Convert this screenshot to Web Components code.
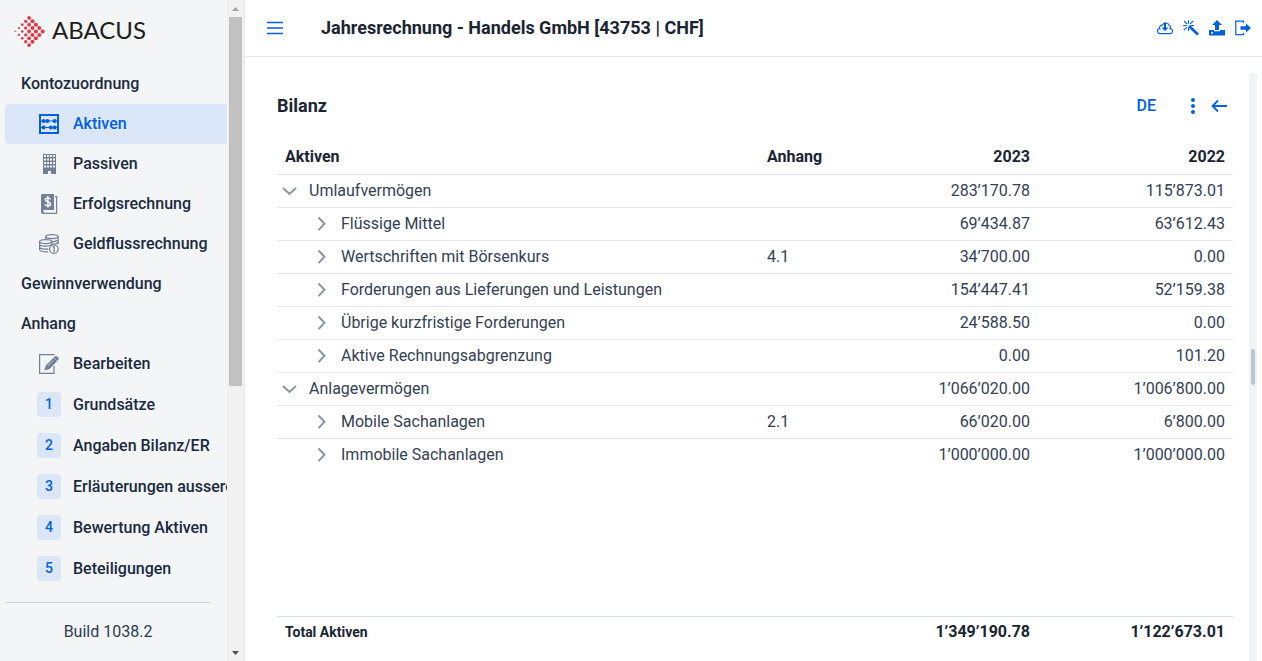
<!DOCTYPE html>
<html lang="de">
<head>
<meta charset="utf-8">
<title>Jahresrechnung</title>
<style>
  html, body { margin: 0; height: 100%; }
  body {
    font-family: Roboto, "Liberation Sans", sans-serif;
    font-size: 16px;
    line-height: 24px;
    background: #fff;
    color: #1a2433;
    --blue: #0060df;
    --tint: #dbe6f8;
    --panel: #f4f5f7;
    --grey: #718096;
    --line: #e6e8eb;
  }
</style>
</head>
<body>
<finance-app></finance-app>
<script>
const ICONS = {
  menu: '<path d="M0 2.500h16M0 8h16M0 13.500h16" stroke="currentColor" stroke-width="1.600"/>',
  abacus: '<path fill="none" stroke="currentColor" stroke-width="2" d="M1 1h18v18H1z"/><path d="M2 7h16M2 13.500h16" stroke="currentColor" stroke-width="1.200"/><g fill="currentColor"><circle cx="4.600" cy="7" r="2"/><circle cx="8.400" cy="7" r="2"/><circle cx="15.600" cy="7" r="2"/><circle cx="4.600" cy="13.500" r="2"/><circle cx="11.800" cy="13.500" r="2"/><circle cx="15.600" cy="13.500" r="2"/></g>',
  building: '<path fill="currentColor" fill-rule="evenodd" d="M4 0h13v20h-5v-3H9v3H4zM5 1v2h2V1zM8 1v2h2V1zM11 1v2h2V1zM14 1v2h2V1zM5 4.500v2h2v-2zM8 4.500v2h2v-2zM11 4.500v2h2v-2zM14 4.500v2h2v-2zM5 8v2h2V8zM8 8v2h2V8zM11 8v2h2V8zM14 8v2h2V8zM5 11.500v2h2v-2zM8 11.500v2h2v-2zM11 11.500v2h2v-2zM14 11.500v2h2v-2z"/>',
  report: '<path fill="currentColor" d="M3.500 0H15v16H5c-1.500 0-1.500 1.600 0 1.600V20H4.500A2.500 2.500 0 0 1 2 17.500v-16A1.500 1.500 0 0 1 3.500 0z"/><path fill="none" stroke="currentColor" stroke-width="1.200" d="M16 2.600h1.600v16.800H5"/><path fill="none" stroke="#f4f5f7" stroke-width="1.500" d="M11.500 5.500C10.800 3.300 6.300 3.300 6.300 5.800c0 2.500 5.300 1.500 5.300 4.100 0 2.500-4.900 2.500-5.600.2M8.900 2v11.500"/>',
  coins: '<g fill="none" stroke="currentColor" stroke-width="1.200"><ellipse cx="13" cy="2.600" rx="6.200" ry="2"/><path d="M6.800 2.600V5M19.200 2.600v7.600M12.500 7.600c3.500.3 6.700-.8 6.700-2.200M13.500 10c3.200.2 5.700-.9 5.700-2.200"/><ellipse cx="6.700" cy="7.600" rx="6.100" ry="2"/><path d="M.6 7.600v8.200c0 1.500 4 2.400 8.500 2.100M.6 10.300c0 2.200 10 2.700 12.200.4V7.600M.6 13c0 1.900 5.500 2.400 8.800 1.800"/><circle cx="14.900" cy="15.100" r="4.300" fill="#f4f5f7"/><path d="M13.700 13.600l1.400-.9v5.200"/></g>',
  edit: '<path fill="none" stroke="currentColor" stroke-width="1.200" d="M15 1.200V.7H.6v18.700H15V12"/><path fill="currentColor" d="M5.300 16.500l1.500-5L16 2.300c1.200-1.200 4.700 1.500 3.600 3.200L10.500 15z"/><path fill="none" stroke="#f4f5f7" stroke-width=".6" d="M14.700 3.600l3.200 3.200M8.500 12.200l5.800-5.800"/>',
  cloud: '<path fill="none" stroke="currentColor" stroke-width="1.100" d="M5.300 5.200A3.800 3.800 0 0 1 12.300 5.600C14.300 6.300 13.400 8 13.100 8.600c3.300 0 3.100 5 0 5H3.300c-3.600 0-3.700-5-.5-5C2 6 4 4.800 5.300 5.200z"/><path fill="currentColor" d="M7 2.500h2v5h2.500L8 11 4.500 7.500H7z"/>',
  wand: '<path d="M6 6l9 8.500" stroke="currentColor" stroke-width="2.800"/><path fill="none" stroke="currentColor" stroke-width="1.200" d="M5.500.2v3.600M.2 5.500h3.600M7.500 5.500h3.600M5.500 7.500v3.600M1.200 1.200l2.800 2.800M10.200.8L7.200 3.800M.8 10.200l3-3"/>',
  upload: '<path fill="currentColor" fill-rule="evenodd" d="M8 0l5 5h-3v5H6V5H3zM0 10h5v1.300h6V10h5v5.500H0zM2.300 12v1.700H4V12z"/>',
  exit: '<path fill="none" stroke="currentColor" stroke-width="1.200" d="M8.500 3V1.200H.8v13.500h7.700V13"/><path fill="currentColor" d="M5.500 6.200H11V3.500L16 8l-5 4.500V9.800H5.500z"/>',
  dots: '<g fill="currentColor"><circle cx="8" cy="2" r="2"/><circle cx="8" cy="8" r="2"/><circle cx="8" cy="14" r="2"/></g>',
  back: '<path fill="none" stroke="currentColor" stroke-width="1.800" d="M16 8H1.500M7 2.500L1.500 8 7 13.500"/>',
  down: '<path fill="none" stroke="currentColor" stroke-width="2" d="M2 5l6.500 6L15 5"/>',
  right: '<path fill="none" stroke="currentColor" stroke-width="2" d="M5.500 1.500l6 6.300-6 6.300"/>'
};

class UiIcon extends HTMLElement {
  connectedCallback() {
    const size = this.getAttribute('size') || 16;
    this.attachShadow({ mode: 'open' }).innerHTML = `
      <style>:host{display:inline-flex;flex:none} svg{display:block}</style>
      <svg width="${size}" height="${size}" viewBox="0 0 ${size} ${size}" aria-hidden="true">${ICONS[this.getAttribute('name')]}</svg>`;
  }
}
customElements.define('ui-icon', UiIcon);

class IconButton extends HTMLElement {
  connectedCallback() {
    this.attachShadow({ mode: 'open' }).innerHTML = `
      <style>
        :host{display:inline-flex;flex:none}
        button{display:flex;align-items:center;justify-content:center;width:100%;height:100%;padding:0;border:0;background:none;color:inherit;font:inherit;cursor:pointer}
      </style>
      <button type="button" aria-label="${this.getAttribute('label')}"><ui-icon name="${this.getAttribute('icon')}"></ui-icon></button>`;
  }
}
customElements.define('icon-button', IconButton);

class BrandLogo extends HTMLElement {
  connectedCallback() {
    let dots = '';
    for (let a = 0; a < 5; a++) for (let b = 0; b < 5; b++) {
      const r = Math.min(2, 0.8 + 0.27 * (a + b));
      dots += `<circle cx="${1.5 + 3.4 * (a + b)}" cy="${15.5 + 3.4 * (a - b)}" r="${r}"/>`;
    }
    this.attachShadow({ mode: 'open' }).innerHTML = `
      <style>
        :host{display:flex;align-items:center;gap:6px;height:64px;padding:0 0 4px 14px;box-sizing:border-box}
        svg{display:block;margin-top:4px}
        span{font:400 24px/32px Lato,sans-serif;color:#1d1d1b}
      </style>
      <svg width="32" height="32" viewBox="0 0 32 32" fill="#e23744" aria-hidden="true">${dots}</svg><span>ABACUS</span>`;
  }
}
customElements.define('brand-logo', BrandLogo);

class NavItem extends HTMLElement {
  connectedCallback() {
    const icon = this.getAttribute('icon');
    const number = this.getAttribute('number');
    const lead = icon ? `<ui-icon name="${icon}" size="20"></ui-icon>` : number ? `<span class="badge">${number}</span>` : '';
    this.attachShadow({ mode: 'open' }).innerHTML = `
      <style>
        :host{display:block;margin-left:5px}
        a{display:flex;align-items:center;height:40px;padding-left:16px;border-radius:4px 0 0 4px;color:#1a2a40;font-weight:500;text-decoration:none;white-space:nowrap}
        .lead{display:flex;justify-content:center;width:24px;margin:0 12px 0 16px;flex:none;color:var(--grey)}
        .badge{width:24px;height:25px;border-radius:4px;background:var(--tint);color:var(--blue);font-size:14px;line-height:25px;text-align:center}
        :host([number]) a{height:41px}
        :host([active]) a{background:var(--tint)}
        :host([active]) a,:host([active]) .lead{color:var(--blue)}
      </style>
      <a href="#">${lead && `<span class="lead">${lead}</span>`}<slot></slot></a>`;
  }
}
customElements.define('nav-item', NavItem);

class SideNav extends HTMLElement {
  connectedCallback() {
    this.attachShadow({ mode: 'open' }).innerHTML = `
      <style>
        :host{display:flex;flex:none;width:245px;height:100%;box-sizing:border-box;border-right:1px solid #e4e7ee;background:var(--panel)}
        .content{flex:1;min-width:0;overflow:hidden}
        footer{margin:13px 16px 0 5px;padding-top:17px;border-top:1px solid #cbd5e0;text-align:center;color:#2d3b50}
        .rail{display:flex;flex-direction:column;width:17px;background:#f1f1f1}
        .thumb{height:369px;margin:0 2px;background:#c1c1c1}
        .arrow{display:flex;align-items:center;justify-content:center;height:17px}
        .arrow.end{margin-top:auto}
      </style>
      <div class="content">
        <brand-logo></brand-logo>
        <nav>
          <nav-item>Kontozuordnung</nav-item>
          <nav-item icon="abacus" active>Aktiven</nav-item>
          <nav-item icon="building">Passiven</nav-item>
          <nav-item icon="report">Erfolgsrechnung</nav-item>
          <nav-item icon="coins">Geldflussrechnung</nav-item>
          <nav-item>Gewinnverwendung</nav-item>
          <nav-item>Anhang</nav-item>
          <nav-item icon="edit">Bearbeiten</nav-item>
          <nav-item number="1">Grundsätze</nav-item>
          <nav-item number="2">Angaben Bilanz/ER</nav-item>
          <nav-item number="3">Erläuterungen ausserordentlich</nav-item>
          <nav-item number="4">Bewertung Aktiven</nav-item>
          <nav-item number="5">Beteiligungen</nav-item>
        </nav>
        <footer>Build 1038.2</footer>
      </div>
      <div class="rail" aria-hidden="true">
        <div class="arrow"><svg width="7" height="4"><path d="M0 4l3.500-4L7 4z" fill="#a3a3a3"/></svg></div>
        <div class="thumb"></div>
        <div class="arrow end"><svg width="7" height="4"><path d="M0 0l3.500 4L7 0z" fill="#505050"/></svg></div>
      </div>`;
  }
}
customElements.define('side-nav', SideNav);

class PageHeader extends HTMLElement {
  connectedCallback() {
    this.attachShadow({ mode: 'open' }).innerHTML = `
      <style>
        :host{display:flex;align-items:center;height:57px;box-sizing:border-box;padding:0 11px 0 22px;border-bottom:1px solid var(--line)}
        h1{flex:1;margin:0 0 0 38px;font-size:18px;line-height:24px;font-weight:700;color:#1a2433}
        icon-button{width:16px;height:24px;color:var(--blue)}
        .actions{display:flex;gap:10px}
      </style>
      <icon-button icon="menu" label="Menü"></icon-button>
      <h1><slot></slot></h1>
      <div class="actions">
        <icon-button icon="cloud" label="Herunterladen"></icon-button>
        <icon-button icon="wand" label="Assistent"></icon-button>
        <icon-button icon="upload" label="Hochladen"></icon-button>
        <icon-button icon="exit" label="Abmelden"></icon-button>
      </div>`;
  }
}
customElements.define('page-header', PageHeader);

const ROWS = [
  [0, 'Umlaufvermögen', '', '283’170.78', '115’873.01'],
  [1, 'Flüssige Mittel', '', '69’434.87', '63’612.43'],
  [1, 'Wertschriften mit Börsenkurs', '4.1', '34’700.00', '0.00'],
  [1, 'Forderungen aus Lieferungen und Leistungen', '', '154’447.41', '52’159.38'],
  [1, 'Übrige kurzfristige Forderungen', '', '24’588.50', '0.00'],
  [1, 'Aktive Rechnungsabgrenzung', '', '0.00', '101.20'],
  [0, 'Anlagevermögen', '', '1’066’020.00', '1’006’800.00'],
  [1, 'Mobile Sachanlagen', '2.1', '66’020.00', '6’800.00'],
  [1, 'Immobile Sachanlagen', '', '1’000’000.00', '1’000’000.00']
];

class BalanceTable extends HTMLElement {
  connectedCallback() {
    const rows = ROWS.map(([level, name, note, current, previous]) => `
      <tr><td class="name level${level}"><icon-button icon="${level ? 'right' : 'down'}" label="${level ? 'Öffnen' : 'Schliessen'}"></icon-button><span>${name}</span></td>
      <td>${note}</td><td class="num">${current}</td><td class="num">${previous}</td></tr>`).join('');
    this.attachShadow({ mode: 'open' }).innerHTML = `
      <style>
        :host{display:flex;flex:1;min-height:0}
        table{display:flex;flex-direction:column;flex:1}
        thead,tbody,tfoot{display:block}
        tbody{flex:1}
        tr{display:grid;grid-template-columns:1fr 84px 195px 195px;border-bottom:1px solid var(--line)}
        th,td{box-sizing:border-box;height:32px;padding:0 8px;line-height:32px;text-align:left;white-space:nowrap}
        td{color:#344054}
        thead th{height:34px;line-height:34px;font-weight:700}
        .num{text-align:right}
        .name{display:flex;align-items:center;gap:8px;padding:0}
        .level1{padding-left:32px}
        icon-button{width:24px;height:24px;color:#8b95a5}
        tbody tr:last-child,tfoot tr{border-bottom:0}
        tfoot{border-top:1px solid #d3dbe3}
        tfoot th,tfoot td{height:30px;line-height:30px;font-weight:700;color:#1a2433}
        tfoot th{font-size:14px}
      </style>
      <table aria-label="Bilanz Aktiven">
        <thead><tr><th>Aktiven</th><th>Anhang</th><th class="num">2023</th><th class="num">2022</th></tr></thead>
        <tbody>${rows}</tbody>
        <tfoot><tr><th>Total Aktiven</th><td></td><td class="num">1’349’190.78</td><td class="num">1’122’673.01</td></tr></tfoot>
      </table>`;
  }
}
customElements.define('balance-table', BalanceTable);

class BalancePanel extends HTMLElement {
  connectedCallback() {
    this.attachShadow({ mode: 'open' }).innerHTML = `
      <style>
        :host{display:flex;flex:1;min-height:0;padding:16px 5px 0 32px}
        section{display:flex;flex-direction:column;flex:1;min-width:0;padding:16px 16px 14px 0}
        header{display:flex;align-items:center;height:33px;color:var(--blue)}
        h2{flex:1;margin:0;font-size:18px;line-height:24px;font-weight:700;color:#1a2433}
        .lang{padding:0;margin-right:29px;border:0;background:none;color:inherit;font:500 16px/24px Roboto,sans-serif}
        .tools{display:flex;gap:10px;margin-right:6px}
        icon-button{width:16px;height:24px}
        balance-table{margin-top:18px}
        .rail{display:flex;align-items:center;justify-content:center;width:8px;background:#f2f3f5}
        .thumb{width:4px;height:36px;border-radius:2px;background:#bcc5d0}
      </style>
      <section>
        <header>
          <h2>Bilanz</h2>
          <button class="lang" type="button">DE</button>
          <div class="tools">
            <icon-button icon="dots" label="Mehr"></icon-button>
            <icon-button icon="back" label="Zurück"></icon-button>
          </div>
        </header>
        <balance-table></balance-table>
      </section>
      <div class="rail" aria-hidden="true"><div class="thumb"></div></div>`;
  }
}
customElements.define('balance-panel', BalancePanel);

class FinanceApp extends HTMLElement {
  connectedCallback() {
    this.attachShadow({ mode: 'open' }).innerHTML = `
      <style>
        :host{display:flex;height:100vh}
        main{display:flex;flex-direction:column;flex:1;min-width:0}
      </style>
      <side-nav></side-nav>
      <main>
        <page-header>Jahresrechnung - Handels GmbH [43753 | CHF]</page-header>
        <balance-panel></balance-panel>
      </main>`;
  }
}
customElements.define('finance-app', FinanceApp);
</script>
</body>
</html>
